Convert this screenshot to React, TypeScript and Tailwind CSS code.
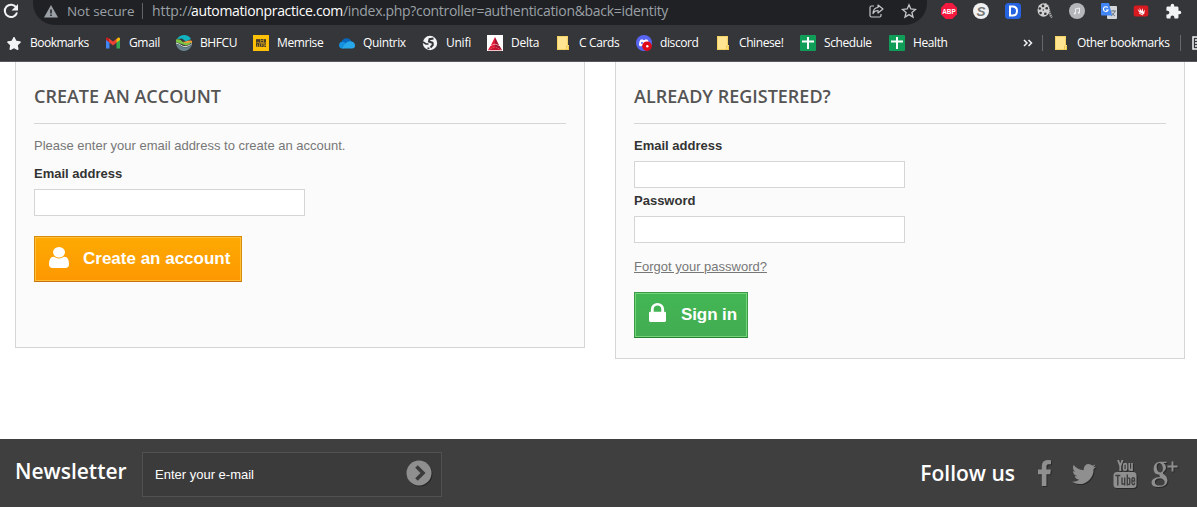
import type { ReactNode } from "react";
import { FaStar } from "react-icons/fa";
import { MdExtension } from "react-icons/md";

const Folder = () => (
  <svg viewBox="0 0 16 16" className="h-4 w-4">
    <path d="M2 1h11v9h1v5H2z" fill="#ffe491" />
    <path d="M12.500 10V1.500h-10v13h9" fill="none" stroke="#f3d163" />
    <path d="M11.500 14.500v-3.500h2v3.500z" fill="#ffe491" stroke="#efc84f" />
  </svg>
);

const Sheet = () => (
  <svg viewBox="0 0 16 16" className="h-4 w-4">
    <rect width="16" height="16" rx="1" fill="#0f9d58" />
    <path d="M2 6.500h12M8 2v12" stroke="#fff" strokeWidth="2" />
  </svg>
);

const Gmail = () => (
  <svg viewBox="0 0 16 16" className="h-4 w-4">
    <path d="M1 4v9.500h3.500V7z" fill="#4285f4" />
    <path d="M15 4v9.500h-3.500V7z" fill="#34a853" />
    <path d="M1 5 4.500 7.500V4L3 2.800C2 2.200 1 3 1 4z" fill="#c5221f" />
    <path d="M4 3.500 8 6.500l4-3V7.300L8 10.400 4 7.300z" fill="#ea4335" />
    <path d="M11.500 7.500V4L13 2.800c1-.6 2 .2 2 1.200v1z" fill="#fbbc04" />
  </svg>
);

const Bhfcu = () => (
  <svg viewBox="0 0 16 16" className="h-4 w-4">
    <path d="M1 4C4-1 12-1.500 15 4L10 6.500 6 3.500z" fill="#12b3c0" />
    <path d="M7 6.500c3 1 5-2 9-.5v2c-3-.5-4 3-7 2z" fill="#f39a3c" />
    <path d="M0 4.500c5-1.500 6 3 9 3.500 2 .3 4 0 6.500-1.500C14 9.500 12 11 8.500 10S3 7.500 0 7.500z" fill="#7bc143" />
    <path d="M0 9c4 0 5 3.500 9 3.500 3 0 5-2 7-3-1 4-4.500 6.500-8 6.500S1 13.500 0 9z" fill="#66808c" />
    <path d="M0 8.200c4 0 5 3.500 9 3.500 3 0 5-2 7-3" fill="none" stroke="#e9f0ee" strokeWidth=".9" />
  </svg>
);

const Memrise = () => (
  <svg viewBox="0 0 16 16" className="h-4 w-4">
    <rect width="16" height="16" fill="#ffc107" />
    <rect x="3" y="4" width="10" height="8" fill="#a5821f" />
    <path d="M3.500 7.500v-3h1v2h1v-2h1v3M8 4.500h2M8 6.500h2M11.500 7.500v-3h1v3M3.500 11.500v-3h2v3M7.500 8.500v3M8.500 11.500h1.500V9M11.500 9H13M11.500 11.500H13" fill="none" stroke="#3c3426" strokeWidth=".9" />
  </svg>
);

const Cloud = () => (
  <svg viewBox="0 0 16 16" className="h-4 w-4">
    <path d="M2 8C4 2 10 2 12.500 6.500L8 11z" fill="#0868bd" />
    <path d="M0 10c0-3 3-4 5-3l6 5-8 1.500C1 13.500 0 12 0 10z" fill="#1490df" />
    <path d="M6 9c2-2.500 5-3 6.500-2.500C15 7 16 8.500 16 10.500S15 13.500 13 13.500H3z" fill="#28a8ea" />
  </svg>
);

const Globe = () => (
  <svg viewBox="0 0 16 16" className="h-4 w-4">
    <circle cx="8" cy="8" r="7.200" fill="#f1f3f4" />
    <path d="M11.500 3.500 7.500 4.200 7 6.500l3.500 1.200.3 2.300-2.300 2.500" fill="none" stroke="#35363a" strokeWidth="2" />
    <path d="M1 7l3 2h2.500M5.500 13l2 .5" fill="none" stroke="#35363a" strokeWidth="1.600" />
  </svg>
);

const Delta = () => (
  <svg viewBox="0 0 16 16" className="h-4 w-4">
    <rect width="16" height="16" fill="#fff" />
    <path d="M8 2v6.800L3.800 10.500z" fill="#e31837" />
    <path d="M8 2v6.800l4.200 1.700z" fill="#a51331" />
    <path d="M.8 15.200l2.600-4.200L8 9.200v2.500z" fill="#e31837" />
    <path d="M15.200 15.200l-2.600-4.200L8 9.200v2.500z" fill="#a51331" />
    <path d="M.8 15.200 8 11.700l7.200 3.500z" fill="#c8102e" />
  </svg>
);

const Discord = () => (
  <svg viewBox="0 0 16 16" className="h-4 w-4">
    <circle cx="8" cy="8" r="8" fill="#5865f2" />
    <path d="M3 10.500C3 8 3.500 6 4.500 4.800L6.500 4.300l.5.800h2l.5-.8 2 .5c1 1.200 1.500 3.200 1.500 5.700l-2.300 1-.8-1H6l-.8 1z" fill="#fff" />
    <circle cx="6" cy="8" r="1" fill="#5865f2" />
    <circle cx="11" cy="11.200" r="4.800" fill="#e00b18" />
    <circle cx="11.300" cy="11.300" r="1.200" fill="#fff" />
  </svg>
);

type Mark = { label: string; icon: ReactNode; width: string; tracking: string };

const marks: Mark[] = [
  { label: "Bookmarks", icon: <FaStar className="h-[13px] w-4 text-[#f1f3f4]" />, width: "w-[99px]", tracking: "tracking-[-0.5px]" },
  { label: "Gmail", icon: <Gmail />, width: "w-[71px]", tracking: "tracking-[-0.35px]" },
  { label: "BHFCU", icon: <Bhfcu />, width: "w-[77px]", tracking: "tracking-[-0.4px]" },
  { label: "Memrise", icon: <Memrise />, width: "w-[86px]", tracking: "tracking-[-0.4px]" },
  { label: "Quintrix", icon: <Cloud />, width: "w-[83px]", tracking: "tracking-[-0.35px]" },
  { label: "Unifi", icon: <Globe />, width: "w-[65px]", tracking: "tracking-[-0.25px]" },
  { label: "Delta", icon: <Delta />, width: "w-[68px]", tracking: "tracking-[-0.25px]" },
  { label: "C Cards", icon: <Folder />, width: "w-[81px]", tracking: "tracking-[-0.35px]" },
  { label: "discord", icon: <Discord />, width: "w-[79px]", tracking: "tracking-[-0.4px]" },
  { label: "Chinese!", icon: <Folder />, width: "w-[85px]", tracking: "tracking-[-0.4px]" },
  { label: "Schedule", icon: <Sheet />, width: "w-[89px]", tracking: "tracking-[-0.4px]" },
  { label: "Health", icon: <Sheet />, width: "w-[133px]", tracking: "tracking-[-0.4px]" },
];

function AddressBar() {
  return (
    <div className="flex h-[25px]">
      <div className="flex w-[33px] items-start pl-[3px] pt-[3px]">
        <svg viewBox="0 0 16 16" className="h-4 w-4">
          <path d="M13.300 4.600A6.200 6.200 0 1 0 14 9.500" fill="none" stroke="#f1f3f4" strokeWidth="2" />
          <path d="M15 1v6.500H8.500z" fill="#f1f3f4" />
        </svg>
      </div>
      <div className="flex h-[25px] w-[894px] items-start rounded-b-[22px] bg-[#202124] pl-[11px] font-['Open_Sans',sans-serif] text-[14px] leading-[22px] text-[#9aa0a6]">
        <svg viewBox="0 0 14 13" className="mt-[5px] h-[13px] w-[14px]">
          <path d="M7 0 14 12.500H0z" fill="#9aa0a6" />
          <path d="M7 4.500v4M7 9.500v1.500" stroke="#202124" strokeWidth="1.500" />
        </svg>
        <span className="ml-[9px] w-[75px] whitespace-nowrap text-[13.500px] tracking-[-0.1px]">Not secure</span>
        <span className="mt-[3px] h-4 w-px bg-[#5f6368]" />
        <span className="ml-[9px] w-[39px] whitespace-nowrap tracking-[-0.1px]">http://</span>
        <span className="w-[152px] whitespace-nowrap tracking-[-0.35px] text-white">automationpractice.com</span>
        <span className="w-[526px] whitespace-nowrap tracking-[-0.310px]">/index.php?controller=authentication&amp;back=identity</span>
        <svg viewBox="0 0 15 14" className="mt-1 h-[14px] w-[15px]" fill="none" stroke="#c4c7cb" strokeWidth="1.200">
          <path d="M5 2H2.500Q1 2 1 3.500v8Q1 13 2.500 13h8q1.500 0 1.500-1.500V10" />
          <path d="M9 1l5 4-5 4V6.500C6.500 6.500 5 7.500 4 9.500 4.200 6 6 3.700 9 3.500z" strokeLinejoin="round" />
        </svg>
        <svg viewBox="0 0 16 16" className="ml-[17px] mt-[3px] h-4 w-4" fill="none" stroke="#c4c7cb" strokeWidth="1.300">
          <path d="M8 1.800 9.800 6l4.700.4-3.600 3.100 1.100 4.600L8 11.600l-4 2.500 1.100-4.600L1.500 6.400 6.200 6z" />
        </svg>
      </div>
      <div className="flex items-start gap-4 pl-[14px] pt-[3px]">
        <svg viewBox="0 0 16 16" className="h-4 w-4 overflow-visible">
          <path d="M4.700 0h6.600L16 4.700v6.600L11.300 16H4.700L0 11.300V4.700z" fill="#f4193f" />
          <text x="8" y="10.800" textAnchor="middle" textLength="13.500" lengthAdjust="spacingAndGlyphs" fontSize="8" fontWeight="700" fontFamily="Liberation Sans" fill="#fff">ABP</text>
        </svg>
        <svg viewBox="0 0 16 16" className="h-4 w-4">
          <circle cx="8" cy="8" r="8" fill="#f1f1f1" />
          <text x="8" y="12.800" textAnchor="middle" fontSize="13.500" fontWeight="700" fontStyle="italic" fontFamily="Liberation Sans" fill="#777">S</text>
        </svg>
        <svg viewBox="0 0 16 16" className="h-4 w-4">
          <rect width="16" height="16" rx="3.500" fill="#2563e0" />
          <path d="M5 3.500h2.500q4.500 0 4.500 4.500T7.500 12.500H5z" fill="none" stroke="#fff" strokeWidth="2" />
        </svg>
        <svg viewBox="0 0 16 16" className="h-4 w-4">
          <path d="M8 1.200c5 .8 3 9 7 13.300" fill="none" stroke="#a5a5a5" strokeWidth="2.200" strokeDasharray="1.500 .6" />
          <ellipse cx="6.500" cy="7" rx="6" ry="6.800" fill="#d0d0d0" />
          <g fill="#37383b">
            <circle cx="6" cy="2.900" r="1.300" /><circle cx="2.800" cy="5.500" r="1.300" /><circle cx="9.700" cy="5.300" r="1.300" />
            <circle cx="3.600" cy="10" r="1.300" /><circle cx="8.300" cy="10.700" r="1.300" /><circle cx="6.300" cy="7" r=".7" />
          </g>
        </svg>
        <svg viewBox="0 0 16 16" className="h-4 w-4">
          <circle cx="8" cy="8" r="8" fill="#b4b6ba" />
          <path d="M6.500 10.500V5.800l4-.8v4.700" fill="none" stroke="#eee" strokeWidth="1" />
          <circle cx="5.800" cy="10.500" r="1" fill="#eee" /><circle cx="9.800" cy="9.700" r="1" fill="#eee" />
        </svg>
        <svg viewBox="0 0 16 16" className="h-4 w-4">
          <rect x="6" y="3" width="10" height="13" rx="1" fill="#d3d7db" />
          <path d="M9.500 8h5.500M12.200 7v1M14 8q-1 3.500-4 5M10.500 9.500q1 2 3.500 3.500" fill="none" stroke="#61717e" strokeWidth=".9" />
          <path d="M1 0h7l3 12.500H1q-1 0-1-1V1q0-1 1-1z" fill="#4285f4" />
          <path d="M6.800 4.700A2.400 2.400 0 1 0 7.100 7H5" fill="none" stroke="#fff" strokeWidth="1.100" />
        </svg>
        <svg viewBox="0 0 16 16" className="h-4 w-4">
          <rect x=".7" y="2.500" width="14.600" height="11" rx="2" fill="#d71920" />
          <path d="m6 9 5 2.500 1-5-2 2.500V5L8.500 8 6.500 4.500 7 8 4.500 6z" fill="#fff" />
          <path d="m6 10 4 2" stroke="#fff" />
        </svg>
        <MdExtension className="h-[17px] w-[17px] text-[#f1f3f4]" />
      </div>
    </div>
  );
}

function BookmarkBar() {
  return (
    <div className="flex h-9 items-center pl-[6px] font-['Open_Sans',sans-serif] text-[12px] text-white">
      {marks.map((m) => (
        <div key={m.label} className={`flex shrink-0 items-center gap-2 whitespace-nowrap ${m.width}`}>
          {m.icon}
          <span className={m.tracking}>{m.label}</span>
        </div>
      ))}
      <svg viewBox="0 0 10 8" className="ml-[1px] h-2 w-[10px]" fill="none" stroke="#f1f3f4" strokeWidth="1.500">
        <path d="m1 1 3 3-3 3M5.500 1l3 3-3 3" />
      </svg>
      <span className="ml-[9px] h-4 w-px bg-[#66686d]" />
      <div className="ml-[10px] flex w-[127px] shrink-0 items-center gap-2 whitespace-nowrap">
        <Folder />
        <span className="tracking-[-0.4px]">Other bookmarks</span>
      </div>
      <span className="h-4 w-px bg-[#66686d]" />
      <svg viewBox="0 0 5 14" className="ml-[11px] h-[14px] w-[5px]">
        <path d="M5 1H1v12h4M3 4h2M3 7h2M3 10h2" fill="none" stroke="#f1f3f4" strokeWidth="1.500" />
      </svg>
    </div>
  );
}

function CardTitle({ children }: { children: ReactNode }) {
  return (
    <h3 className="h-[62px] border-b border-[#d6d4d4] pt-[22px] font-['Open_Sans',sans-serif] text-[18px] font-semibold leading-[24px] text-[#555454]">
      {children}
    </h3>
  );
}

function Field({ label, type }: { label: string; type: string }) {
  return (
    <label className="block">
      <span className="block h-[24px] text-[13px] font-bold leading-[18px] text-[#333]">{label}</span>
      <input type={type} className="block h-[27px] w-[271px] border border-[#d6d4d4] bg-white px-2" />
    </label>
  );
}

const iconShadow = "drop-shadow-[1px_1px_0_rgba(0,0,0,0.35)]";

function Footer() {
  return (
    <footer className="flex h-[68px] bg-[#3f3f3f] font-['Open_Sans',sans-serif] text-white">
      <h4 className="w-[127px] pl-[15px] pt-[18px] text-[21px] font-semibold leading-[28px]">Newsletter</h4>
      <div className="mt-[13px] ml-[15px] flex h-[45px] w-[300px] items-center border border-[#515151] bg-[#3c3b3b] pl-[12px]">
        <span className="w-[251px] font-['Liberation_Sans',sans-serif] text-[13px]">Enter your e-mail</span>
        <svg viewBox="0 0 26 26" className={`-mt-[3px] h-[26px] w-[26px] ${iconShadow}`}>
          <circle cx="13" cy="13" r="12.500" fill="#908f8f" />
          <path d="m10.500 6.500 6.500 6.500-6.500 6.500" fill="none" stroke="#3c3b3b" strokeWidth="3.600" />
        </svg>
      </div>
      <h4 className="ml-auto pt-[20px] text-[21px] font-semibold leading-[28px]">Follow us</h4>
      <svg viewBox="479 0 864 1664" preserveAspectRatio="none" className={`ml-[23px] mt-[21px] h-[26px] w-[13px] ${iconShadow}`}>
        <path fill="#908f8f" d="M1343 12v264h-157q-86 0-116 36t-30 108v189h293l-39 296h-254v759h-306v-759h-255v-296h255v-218q0-186 104-288.500t277-102.500q147 0 228 12z" />
      </svg>
      <svg viewBox="108 256 1576 1280" preserveAspectRatio="none" className={`ml-[21px] mt-[25px] h-[20px] w-[24px] ${iconShadow}`}>
        <path fill="#908f8f" d="M1684 408q-67 98-162 167 1 14 1 42 0 130-38 259.500t-115.500 248.500-184.500 210.500-258 146-323 54.500q-271 0-496-145 35 4 78 4 225 0 401-138-105-2-188-64.500t-114-159.500q33 5 61 5 43 0 85-11-112-23-185.500-111.500t-73.500-205.500v-4q68 38 146 41-66-44-105-115t-39-154q0-88 44-163 121 149 294.500 238.500t371.500 99.500q-8-38-8-74 0-134 94.500-228.500t228.500-94.500q140 0 236 102 109-21 205-78-37 115-142 178 93-10 186-50z" />
      </svg>
      <svg viewBox="0 0 24 28" className={`ml-[17px] mt-[21px] h-[28px] w-[24px] ${iconShadow}`}>
        <path d="m5 0 2.300 6v5M9.600 0 7.300 6" fill="none" stroke="#908f8f" strokeWidth="1.900" />
        <rect x="10.700" y="3.700" width="2.800" height="6.500" rx="1.400" fill="none" stroke="#908f8f" strokeWidth="1.700" />
        <path d="M16.300 3v6q0 2 2.600 0M19 3v8" fill="none" stroke="#908f8f" strokeWidth="1.700" />
        <rect x="0.500" y="12" width="23" height="16" rx="3.500" fill="#908f8f" />
        <path d="M2.300 15.500h5M4.800 15.500v10M9 17.500v6q0 1.600 2.300 0M11.700 17.500v8M14.300 14.500v11M14.500 18.500q2.300-1.200 2.300 1v3.500q0 2.500-2.300 1M21.500 22.500v.8q0 1.500-1.200 1.500T19 23.300v-4q0-1.500 1.300-1.500t1.200 1.500v1.700H19" fill="none" stroke="#3f3f3f" strokeWidth="1.400" />
      </svg>
      <svg viewBox="0 0 27 27" className={`ml-[14px] mr-[19px] mt-[22px] h-[27px] w-[27px] ${iconShadow}`}>
        <path fillRule="evenodd" fill="#908f8f" d="M8.500.8H16.500L14.700 2H12.500Q15 3.500 15 6.500 15 9 12.600 10.700q-1.500 1.200-.2 2.300l1.600 1.200Q16.500 16 16.500 19 16.500 26 7.500 26 .5 26 .5 21.500q0-5 8.500-5.500-.9-1.200-.4-2.300Q2.800 14 2.600 8 2.700 1.500 8.500.8zM8 2Q5.300 2.500 5.700 6.500q.6 4.800 3.600 5 3-.3 2.600-4.500Q11.300 2.200 8 2zM9.500 17.200q-5.500.3-5.700 3.700 0 3.700 5 3.700 5-.2 5-3.700 0-1.600-2.300-3z" />
        <path d="M21.500.5v10M16.500 5.500h10" stroke="#908f8f" strokeWidth="1.900" />
      </svg>
    </footer>
  );
}

export default function App() {
  return (
    <div className="flex h-[507px] w-[1197px] flex-col overflow-hidden bg-white font-['Liberation_Sans',sans-serif]">
      <header className="h-[62px] shrink-0 border-b border-[#5b585c] bg-[#35363a]">
        <AddressBar />
        <BookmarkBar />
      </header>
      <main className="flex h-[377px] shrink-0 items-start gap-[30px] pl-[15px]">
        <section className="h-[286px] w-[570px] border border-t-0 border-[#d6d4d4] bg-[#fbfbfb] px-[18px]">
          <CardTitle>CREATE AN ACCOUNT</CardTitle>
          <p className="mb-[10px] pt-[13px] text-[13px] leading-[18px] text-[#777]">Please enter your email address to create an account.</p>
          <Field label="Email address" type="email" />
          <button className="mt-[20px] flex h-[46px] w-[208px] items-center whitespace-nowrap border border-[#d88a0a] border-b-[#c8700f] bg-gradient-to-b from-[#fdaa02] to-[#fe9702] pl-[14px] text-[17px] font-bold text-white shadow-[inset_0_0_0_1px_#ffc037]">
            <svg viewBox="256 128 1280 1536" preserveAspectRatio="none" className="-mt-[3px] mr-[14px] h-[21px] w-[20px]" fill="#fff">
              <path d="M1536 1399q0 109-62.500 187t-150.500 78h-854q-88 0-150.500-78t-62.500-187q0-85 8.500-160.500t31.500-152 58.500-131 94-89 134.500-34.500q131 128 313 128t313-128q76 0 134.500 34.500t94 89 58.500 131 31.500 152 8.500 160.500zm-256-887q0 159-112.500 271.500t-271.500 112.500-271.500-112.500-112.500-271.500 112.500-271.500 271.500-112.500 271.500 112.500 112.500 271.500z" />
            </svg>
            Create an account
          </button>
        </section>
        <section className="h-[297px] w-[570px] border border-t-0 border-[#d6d4d4] bg-[#fbfbfb] px-[18px]">
          <CardTitle>ALREADY REGISTERED?</CardTitle>
          <div className="flex flex-col gap-[4px] pt-[13px]">
            <Field label="Email address" type="email" />
            <Field label="Password" type="password" />
          </div>
          <p className="mt-[15px] text-[13px] leading-[18px] text-[#777] underline">Forgot your password?</p>
          <button className="mt-[16px] flex h-[46px] w-[114px] items-center whitespace-nowrap border border-[#399a49] border-b-[#247f32] bg-gradient-to-b from-[#43b754] to-[#42ac52] pl-[14px] text-[17px] font-bold tracking-[-0.1px] text-white shadow-[inset_0_0_0_1px_#74d578]">
            <svg viewBox="320 128 1152 1408" preserveAspectRatio="none" className="-mt-[5px] mr-[15px] h-[19px] w-[17px]" fill="#fff">
              <path d="M640 768h512v-192q0-106-75-181t-181-75-181 75-75 181v192zm832 96v576q0 40-28 68t-68 28h-960q-40 0-68-28t-28-68v-576q0-40 28-68t68-28h32v-192q0-184 132-316t316-132 316 132 132 316v192h32q40 0 68 28t28 68z" />
            </svg>
            Sign in
          </button>
        </section>
      </main>
      <Footer />
    </div>
  );
}
